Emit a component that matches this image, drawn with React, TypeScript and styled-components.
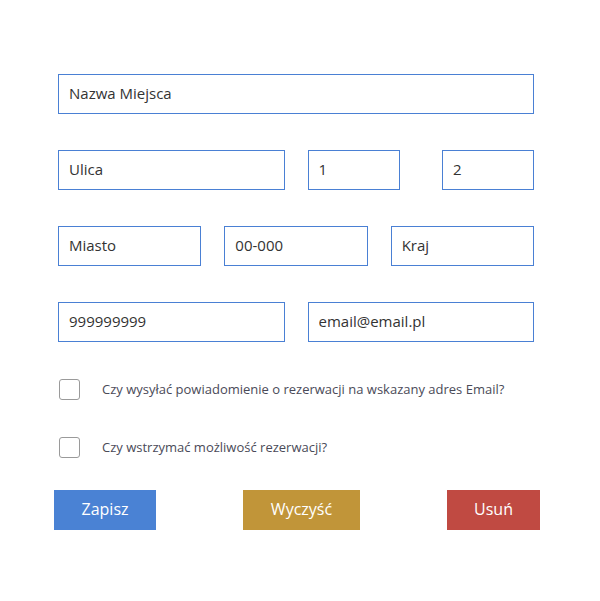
import React from "react";
import styled, { createGlobalStyle } from "styled-components";

const Global = createGlobalStyle`
  html, body { margin: 0; padding: 0; background: #ffffff; }
  body { font-family: "Fira Sans", "Open Sans", "Noto Sans", sans-serif; }
  * { box-sizing: border-box; }
`;

const Form = styled.form`
  width: 476px;
  margin: 74px 0 0 58px;
  display: flex;
  flex-direction: column;
`;

const Row = styled.div<{ $cols: string }>`
  display: grid;
  grid-template-columns: ${(p) => p.$cols};
  column-gap: 23px;
  margin-bottom: 36px;
`;

const SubRow = styled.div`
  display: flex;
  justify-content: space-between;
`;

const Input = styled.input<{ $w?: number }>`
  height: 40px;
  width: ${(p) => (p.$w ? `${p.$w}px` : "100%")};
  border: 1px solid #4a80d4;
  border-radius: 0;
  padding: 0 10px 3px;
  font-family: "Open Sans", "Noto Sans", sans-serif;
  font-size: 15px;
  color: #333333;
  background: #fff;
  outline: none;
`;

const CheckRow = styled.label`
  display: flex;
  align-items: center;
  height: 21px;
  margin-bottom: 37px;
  &:first-of-type { margin-top: 1px; }
`;

const CheckBox = styled.span`
  width: 21px;
  height: 21px;
  margin-left: 1px;
  border: 1px solid #9a9a9a;
  border-radius: 3px;
  background: #fff;
  flex: none;
`;

const CheckText = styled.span`
  margin-left: 22px;
  padding-bottom: 2px;
  font-family: "Open Sans", "Noto Sans", sans-serif;
  font-size: 13px;
  color: #4a4a58;
`;

const Buttons = styled.div`
  display: flex;
  justify-content: space-between;
  margin: -5px -6px 0 -4px;
`;

const Button = styled.button<{ $bg: string; $w: number }>`
  width: ${(p) => p.$w}px;
  height: 40px;
  padding: 0 0 2px;
  border: none;
  border-radius: 0;
  background: ${(p) => p.$bg};
  color: #ffffff;
  font-family: "Open Sans", "Noto Sans", sans-serif;
  font-size: 16px;
  cursor: pointer;
`;

export default function App() {
  return (
    <>
      <Global />
      <Form onSubmit={(e) => e.preventDefault()}>
        <Row $cols="1fr">
          <Input defaultValue="Nazwa Miejsca" />
        </Row>
        <Row $cols="1fr 1fr">
          <Input defaultValue="Ulica" />
          <SubRow>
            <Input $w={92} defaultValue="1" />
            <Input $w={92} defaultValue="2" />
          </SubRow>
        </Row>
        <Row $cols="1fr 1fr 1fr">
          <Input defaultValue="Miasto" />
          <Input defaultValue="00-000" />
          <Input defaultValue="Kraj" />
        </Row>
        <Row $cols="1fr 1fr">
          <Input defaultValue="999999999" />
          <Input defaultValue="email@email.pl" />
        </Row>
        <CheckRow>
          <CheckBox />
          <CheckText>Czy wysyłać powiadomienie o rezerwacji na wskazany adres Email?</CheckText>
        </CheckRow>
        <CheckRow>
          <CheckBox />
          <CheckText>Czy wstrzymać możliwość rezerwacji?</CheckText>
        </CheckRow>
        <Buttons>
          <Button type="button" $bg="#4a82d4" $w={102}>Zapisz</Button>
          <Button type="button" $bg="#c19539" $w={117}>Wyczyść</Button>
          <Button type="button" $bg="#c04a42" $w={93}>Usuń</Button>
        </Buttons>
      </Form>
    </>
  );
}
